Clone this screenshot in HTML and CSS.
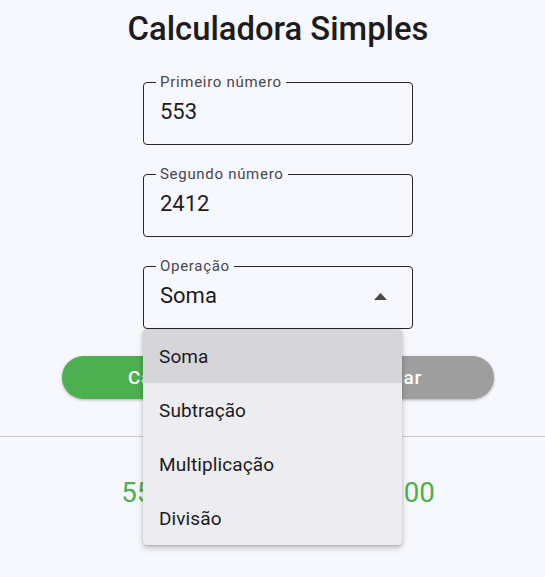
FILE: index.html
```html
<!DOCTYPE html>
<html lang="pt">
<head>
<meta charset="utf-8">
<title>Calculadora Simples</title>
<link rel="stylesheet" href="styles.css">
</head>
<body>
<main class="page">
  <section class="column form">
    <h1 class="title">Calculadora Simples</h1>
    <fieldset class="field field-first">
      <legend>Primeiro número</legend>
      <div class="row"><span class="value">553</span></div>
    </fieldset>
    <fieldset class="field">
      <legend>Segundo número</legend>
      <div class="row"><span class="value">2412</span></div>
    </fieldset>
    <div class="select-wrap">
      <fieldset class="field select">
        <legend>Operação</legend>
        <div class="row">
          <span class="value">Soma</span>
          <svg class="arrow" width="13" height="7" viewBox="0 0 13 7"><polygon points="0,7 6.5,0 13,7"/></svg>
        </div>
      </fieldset>
      <ul class="menu">
        <li class="menu-item active">Soma</li>
        <li class="menu-item">Subtração</li>
        <li class="menu-item">Multiplicação</li>
        <li class="menu-item">Divisão</li>
      </ul>
    </div>
    <div class="buttons">
      <button class="btn btn-green">Calcular</button>
      <button class="btn btn-gray">Limpar</button>
    </div>
  </section>
  <hr class="divider">
  <section class="column">
    <p class="result">553.0 + 2412.0 = 2965.00</p>
  </section>
</main>
</body>
</html>
```
FILE: styles.css
```css
* { box-sizing: border-box; }
html, body { height: 100%; }
body {
  margin: 0;
  background: #f7f8fd;
  font-family: Roboto, "Noto Sans", sans-serif;
  color: #1d1b20;
}
.page { min-height: 100%; }
.column {
  padding-left: 11px;
  display: flex;
  flex-direction: column;
  align-items: center;
}
.form { padding-top: 9px; }
.title {
  margin: 0;
  font-size: 32.8px;
  line-height: 40px;
  font-weight: 500;
}
.field {
  width: 270px;
  margin: 20px 0 0;
  padding: 0 16px;
  min-width: 0;
  border: 1px solid #26262a;
  border-radius: 4px;
}
.field-first { margin-top: 24px; }
.field legend {
  font-size: 15px;
  line-height: 18px;
  padding: 0 4px;
  margin-left: -4px;
  color: #49454f;
  letter-spacing: 0.7px;
}
.row {
  display: flex;
  align-items: center;
  height: 42px;
  margin-bottom: 11px;
}
.value {
  font-size: 22px;
  line-height: 26px;
  flex: 1;
}
.select { padding-right: 25px; }
.arrow { fill: #49454f; }
.select-wrap { position: relative; z-index: 2; }
.menu {
  position: absolute;
  top: 100%;
  left: 0;
  width: 259px;
  margin: 0;
  padding: 0;
  list-style: none;
  background: #ececf1;
  border-radius: 4px;
  overflow: hidden;
  box-shadow: 0 3px 6px rgba(0,0,0,0.22), 0 1px 2px rgba(0,0,0,0.15);
}
.menu-item {
  height: 54px;
  display: flex;
  align-items: center;
  padding-left: 16px;
  font-size: 19px;
  letter-spacing: 0.1px;
}
.menu-item.active { background: #d5d5da; }
.buttons {
  margin-top: 27px;
  width: 432px;
  display: flex;
  gap: 16px;
}
.btn {
  flex: 1;
  height: 43px;
  border: none;
  border-radius: 22px;
  color: #fff;
  font-family: inherit;
  font-size: 19px;
  font-weight: 500;
  letter-spacing: 0.8px;
  box-shadow: 0 1px 3px rgba(0,0,0,0.3);
}
.btn-green { background: #4caf50; }
.btn-gray { background: #9e9e9e; }
.divider {
  margin: 37px 0 0;
  border: 0;
  border-top: 1px solid #c8c8cd;
  height: 0;
}
.result {
  margin: 0;
  padding-top: 39px;
  font-size: 27.7px;
  line-height: 34px;
  color: #4caf50;
}
```
